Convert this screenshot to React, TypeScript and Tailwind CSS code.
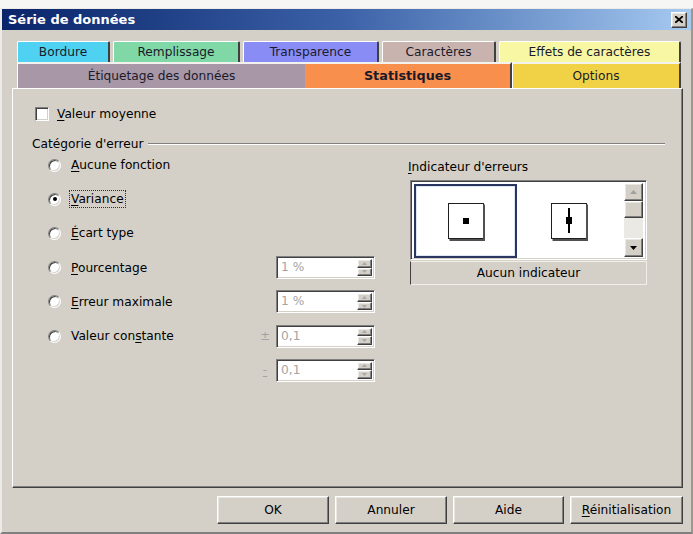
import React from "react";

const raised =
  "border border-t-white border-l-white border-r-[#404040] border-b-[#404040] shadow-[inset_-1px_-1px_0_#808080,inset_1px_1px_0_#e9e7e2]";
const sunken =
  "border border-t-[#808080] border-l-[#808080] border-r-white border-b-white shadow-[inset_1px_1px_0_#404040,inset_-1px_-1px_0_#d4d0c8]";

function U({ children }: { children: React.ReactNode }) {
  return <span className="underline underline-offset-[2px] decoration-1">{children}</span>;
}

function Tri({ down, color }: { down?: boolean; color: string }) {
  return (
    <svg width="7" height="4" viewBox="0 0 7 4">
      {down ? <path d="M0 0 H7 L3.5 4 Z" fill={color} /> : <path d="M0 4 H7 L3.5 0 Z" fill={color} />}
    </svg>
  );
}

function SmallTri({ down }: { down?: boolean }) {
  return (
    <svg width="5" height="3" viewBox="0 0 5 3">
      {down ? <path d="M0 0 H5 L2.5 3 Z" fill="#a8a8a8" /> : <path d="M0 3 H5 L2.5 0 Z" fill="#a8a8a8" />}
    </svg>
  );
}

function Radio({ checked }: { checked?: boolean }) {
  return (
    <div className="w-[13px] h-[13px] shrink-0 rounded-full border border-t-[#808080] border-l-[#808080] border-r-white border-b-white shadow-[inset_1px_1px_0_#404040,inset_-1px_-1px_0_#d4d0c8] bg-white flex items-center justify-center">
      {checked && <div className="w-[4px] h-[4px] rounded-full bg-black" />}
    </div>
  );
}

function Spin({ value }: { value: string }) {
  return (
    <div className={`w-[99px] h-[23px] flex bg-white p-[2px] ${sunken}`}>
      <div className="flex-1 text-[#a4a4a4] pl-[2px] leading-[17px]">{value}</div>
      <div className="w-[15px] flex flex-col">
        <div className={`flex-1 bg-[#d4d0c8] flex items-center justify-center ${raised}`}>
          <SmallTri />
        </div>
        <div className={`flex-1 bg-[#d4d0c8] flex items-center justify-center ${raised}`}>
          <SmallTri down />
        </div>
      </div>
    </div>
  );
}

function Row({
  children,
  sign,
  field,
}: {
  children?: React.ReactNode;
  sign?: React.ReactNode;
  field?: string;
}) {
  return (
    <div className="h-[34.2px] flex items-center">
      <div className="flex-1 flex items-center">{children}</div>
      <div className="w-[18px] mr-[2px] text-center text-[#a4a4a4]">{sign}</div>
      <div className="w-[99px]">{field ? <Spin value={field} /> : null}</div>
    </div>
  );
}

function Symbol1() {
  return (
    <svg width="38" height="38" viewBox="0 0 38 38">
      <rect x="0.5" y="0.5" width="35" height="35" fill="white" stroke="#202020" />
      <path d="M36 1.5 V37 H1.5" stroke="#505050" strokeWidth="2" fill="none" />
      <rect x="15" y="15" width="6" height="6" fill="black" />
    </svg>
  );
}

function Symbol2() {
  return (
    <svg width="38" height="38" viewBox="0 0 38 38">
      <rect x="0.5" y="0.5" width="35" height="35" fill="white" stroke="#202020" />
      <path d="M36 1.5 V37 H1.5" stroke="#505050" strokeWidth="2" fill="none" />
      <rect x="17" y="5" width="2" height="25" fill="black" />
      <rect x="15" y="14" width="6" height="7" fill="black" />
    </svg>
  );
}

export default function App() {
  return (
    <div className="w-[693px] h-[534px] bg-[#f6f6f4] pt-[8px] font-['DejaVu_Sans',sans-serif] text-[12.2px] text-black overflow-hidden">
      <div className="h-[526px] flex flex-col bg-[#d4d0c8] border-l-2 border-l-[#ecebe7] border-t border-t-[#ecebe7] border-r-2 border-r-[#9c9890] border-b-2 border-b-[#808080]">
        {/* Title bar */}
        <div className="h-[21px] flex items-center bg-linear-to-r from-[#0a246a] via-[#3d62a8] to-[#a6caf0] pl-[6px] pr-[4px]">
          <div className="flex-1 text-white font-bold text-[13px] leading-[21px]">Série de données</div>
          <div className={`w-[16px] h-[16px] bg-[#d4d0c8] flex items-center justify-center ${raised}`}>
            <svg width="8" height="7" viewBox="0 0 8 7">
              <path d="M0 0 L8 7 M8 0 L0 7" stroke="black" strokeWidth="1.8" />
            </svg>
          </div>
        </div>

        {/* Body */}
        <div className="flex-1 flex flex-col pl-[10px] pr-[8px] pt-[11px]">
          {/* Tabs */}
          <div className="ml-[5px] flex flex-col text-[#1a1a2a]">
            <div className="h-[21px] flex gap-[3px]">
              <div className="w-[93px] flex items-center justify-center bg-[#4fd2f2] border-t border-l border-t-white border-l-white border-r-2 border-r-[#404040] rounded-t-[2px]">Bordure</div>
              <div className="w-[127px] flex items-center justify-center bg-[#7fd8a6] border-t border-l border-t-white border-l-white border-r-2 border-r-[#404040] rounded-t-[2px]">Remplissage</div>
              <div className="w-[136px] flex items-center justify-center bg-[#8a8cf6] border-t border-l border-t-white border-l-white border-r-2 border-r-[#404040] rounded-t-[2px]">Transparence</div>
              <div className="w-[114px] flex items-center justify-center bg-[#c9b3ae] border-t border-l border-t-white border-l-white border-r-2 border-r-[#404040] rounded-t-[2px]">Caractères</div>
              <div className="w-[182px] flex items-center justify-center bg-[#f7f7a4] border-t border-l border-t-white border-l-white border-r-2 border-r-[#404040] rounded-t-[2px]">Effets de caractères</div>
            </div>
            <div className="h-[26px] flex">
              <div className="w-[288px] flex items-center justify-center bg-[#a897a7] border-t-2 border-l border-t-[#f4f2ee] border-l-white">Étiquetage des données</div>
              <div className="w-[207px] flex items-center justify-center bg-[#f98f4c] border-t-2 border-t-[#f4f2ee] border-r-2 border-r-[#404040] font-bold text-[12.8px]">Statistiques</div>
              <div className="w-[169px] flex items-center justify-center bg-[#f1d246] border-t-2 border-l border-t-[#f4f2ee] border-l-white border-r-2 border-r-[#404040]">Options</div>
            </div>
          </div>

          {/* Panel */}
          <div className="h-[400px] flex flex-col pl-[19px] pr-[17px] pt-[18px] border border-t-white border-l-white border-r-[#404040] border-b-[#404040] shadow-[inset_-1px_-1px_0_#808080]">
            <div className="h-[14px] ml-[3px] flex items-center">
              <div className={`w-[14px] h-[14px] bg-white ${sunken}`} />
              <div className="ml-[8px]">
                <U>V</U>aleur moyenne
              </div>
            </div>

            <div className="mt-[15px] h-[16px] flex items-center">
              <div>Catégorie d'erreur</div>
              <div className="flex-1 ml-[4px] h-[2px] border-t border-t-[#808080] border-b border-b-white" />
            </div>

            <div className="-mt-[4px] flex">
              <div className="ml-[16px] w-[327px] flex flex-col">
                <Row>
                  <Radio />
                  <div className="ml-[10px]">
                    <U>A</U>ucune fonction
                  </div>
                </Row>
                <Row>
                  <Radio checked />
                  <div className="ml-[8px] px-[1px] border border-dotted border-[#303030] leading-[16px]">
                    <U>V</U>ariance
                  </div>
                </Row>
                <Row>
                  <Radio />
                  <div className="ml-[10px]">
                    <U>É</U>cart type
                  </div>
                </Row>
                <Row field="1 %">
                  <Radio />
                  <div className="ml-[10px]">
                    <U>P</U>ourcentage
                  </div>
                </Row>
                <Row field="1 %">
                  <Radio />
                  <div className="ml-[10px]">
                    <U>E</U>rreur maximale
                  </div>
                </Row>
                <Row field="0,1" sign="±">
                  <Radio />
                  <div className="ml-[10px]">
                    Valeur con<U>s</U>tante
                  </div>
                </Row>
                <Row field="0,1" sign={<U>-</U>} />
              </div>

              <div className="ml-[33px] w-[239px] flex flex-col">
                <div className="mt-[11px] h-[16px] leading-[16px]">
                  <U>I</U>ndicateur d'erreurs
                </div>
                <div className={`mt-[5px] ml-[2px] w-[237px] h-[80px] bg-white p-[2px] flex ${sunken}`}>
                  <div className="pl-[1px] pt-[1px] flex">
                    <div className="w-[103px] h-[74px] border-2 border-[#2a3660] shadow-[inset_0_0_0_1px_#dce6f4] flex items-center justify-center pl-[2px] pt-[2px]">
                      <Symbol1 />
                    </div>
                    <div className="w-[104px] h-[74px] flex items-center justify-center pl-[2px] pt-[2px]">
                      <Symbol2 />
                    </div>
                  </div>
                  <div className="ml-auto mr-[1px] w-[19px] flex flex-col">
                    <div className={`h-[18px] bg-[#d4d0c8] flex items-center justify-center ${raised}`}>
                      <Tri color="#a0a0a0" />
                    </div>
                    <div className={`h-[17px] bg-[#d4d0c8] ${raised}`} />
                    <div className="h-[20px] bg-[#ebe9e4]" />
                    <div className={`h-[19px] bg-[#d4d0c8] flex items-center justify-center ${raised}`}>
                      <Tri down color="#000" />
                    </div>
                  </div>
                </div>
                <div className="mt-[1px] ml-[2px] w-[237px] h-[24px] flex items-center justify-center border border-l-[#404040] border-t-[#f2f0ec] border-r-[#f2f0ec] border-b-[#f2f0ec]">
                  Aucun indicateur
                </div>
              </div>
            </div>
          </div>

          {/* Buttons */}
          <div className="mt-[8px] flex justify-end gap-[6px]">
            <div className={`w-[112px] h-[28px] flex items-center justify-center bg-[#d4d0c8] ${raised}`}>OK</div>
            <div className={`w-[112px] h-[28px] flex items-center justify-center bg-[#d4d0c8] ${raised}`}>Annuler</div>
            <div className={`w-[111px] h-[28px] flex items-center justify-center bg-[#d4d0c8] ${raised}`}>Aide</div>
            <div className={`w-[113px] h-[28px] flex items-center justify-center bg-[#d4d0c8] ${raised}`}>
              <span>
                <U>R</U>éinitialisation
              </span>
            </div>
          </div>
        </div>
      </div>
    </div>
  );
}
